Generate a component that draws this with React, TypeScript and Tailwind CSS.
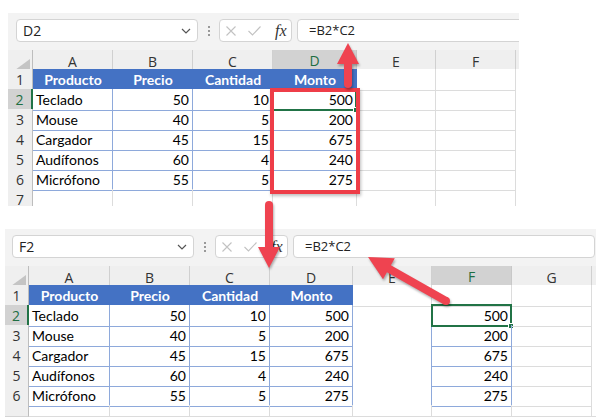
import React from 'react';

const data = [
  ['Teclado', '50', '10', '500'],
  ['Mouse', '40', '5', '200'],
  ['Cargador', '45', '15', '675'],
  ['Audífonos', '60', '4', '240'],
  ['Micrófono', '55', '5', '275'],
];
const heads = ['Producto', 'Precio', 'Cantidad', 'Monto'];

type SheetProps = {
  name: string;
  letters: string[];
  gridCls: string;
  selCol: number;
  showF?: boolean;
  sheetCls: string;
  toolbarCls: string;
  formulaCls: string;
  lastRowCls: string;
  hideLastNum?: boolean;
};

const uiFont = "font-['Open_Sans',sans-serif]";
const cellFont = "font-['Lato',sans-serif]";

function Toolbar({ name, toolbarCls, formulaCls }: { name: string; toolbarCls: string; formulaCls: string }) {
  return (
    <div className={`flex items-stretch pt-[6px] pb-[8px] ${toolbarCls}`}>
      <div className="flex w-[182px] items-center justify-between rounded-[4px] border border-[#d4d4d4] bg-white pl-[6px] pr-[6px]">
        <span className={`${uiFont} text-[14px] text-[#222]`}>{name}</span>
        <svg width="10" height="6" viewBox="0 0 10 6">
          <path d="M1 1 L5 5 L9 1" fill="none" stroke="#555" strokeWidth="1.2" />
        </svg>
      </div>
      <div className="flex w-[21px] flex-col items-center justify-center gap-[2px]">
        <span className="h-[2px] w-[2px] bg-[#999]" />
        <span className="h-[2px] w-[2px] bg-[#999]" />
        <span className="h-[2px] w-[2px] bg-[#999]" />
      </div>
      <div className="flex w-[73px] items-center rounded-[4px] border border-[#d4d4d4] bg-white pl-[6px]">
        <svg width="10" height="10" viewBox="0 0 10 10">
          <path d="M0.5 0.5 L9.5 9.5 M9.5 0.5 L0.5 9.5" stroke="#c2c2c2" strokeWidth="1.1" />
        </svg>
        <svg className="ml-[12px]" width="13" height="10" viewBox="0 0 13 10">
          <path d="M0.5 5 L4.5 9 L12.5 0.5" fill="none" stroke="#c2c2c2" strokeWidth="1.1" />
        </svg>
        <span className="ml-[14px] font-['Liberation_Serif',serif] text-[16px] italic leading-none text-[#333]">fx</span>
      </div>
      <div className={`ml-[5px] flex flex-1 items-center rounded-l-[4px] border border-[#d4d4d4] bg-white pl-[11px] ${formulaCls}`}>
        <span className={`${uiFont} text-[13px] text-[#222]`}>=B2*C2</span>
      </div>
    </div>
  );
}

function Sheet({ name, letters, gridCls, selCol, showF, sheetCls, toolbarCls, formulaCls, lastRowCls, hideLastNum }: SheetProps) {
  const rowNums = [1, 2, 3, 4, 5, 6, 7];
  return (
    <div className={`flex flex-col overflow-hidden bg-[#f3f3f3] ${sheetCls}`}>
      <Toolbar name={name} toolbarCls={toolbarCls} formulaCls={formulaCls} />

      {/* column headers */}
      <div className={`grid h-[19px] ${gridCls}`}>
        <div className="flex items-end justify-end border-b border-r border-[#bdbdbd] bg-[#efefef] pb-[2px] pr-[2px]">
          <svg width="15" height="11" viewBox="0 0 15 11">
            <polygon points="15,0 15,11 0,11" fill="#c4c4c4" />
          </svg>
        </div>
        {letters.map((l, i) =>
          i === selCol ? (
            <div
              key={l}
              className={`flex items-center justify-center border-b-2 border-r border-b-[#217346] border-r-[#c8c8c8] bg-[#d2d2d2] ${uiFont} text-[14px] text-[#1e6e42]`}
            >
              {l}
            </div>
          ) : (
            <div
              key={l}
              className={`flex items-center justify-center border-b border-r border-b-[#bdbdbd] border-r-[#d0d0d0] bg-[#efefef] ${uiFont} text-[14px] text-[#333]`}
            >
              {l}
            </div>
          )
        )}
        <div className="border-b border-[#bdbdbd] bg-[#efefef]" />
      </div>

      {/* rows */}
      {rowNums.map((r) => (
        <div key={r} className={`grid bg-white ${gridCls} ${r === 7 ? lastRowCls : 'h-[20px]'}`}>
          {r === 2 ? (
            <div className={`flex items-center justify-center border-b border-r-2 border-b-[#d4d4d4] border-r-[#217346] bg-[#d2d2d2] ${uiFont} text-[14px] text-[#1e6e42]`}>
              {r}
            </div>
          ) : (
            <div className={`flex items-center justify-center border-b border-r border-b-[#d4d4d4] border-r-[#bdbdbd] bg-[#efefef] ${uiFont} text-[14px] text-[#333]`}>
              {r === 7 && hideLastNum ? '' : r}
            </div>
          )}
          {letters.map((l, c) => {
            const selected = r === 2 && c === selCol;
            const overlay = selected ? (
              <div className="absolute -left-[1px] -top-[1px] bottom-[-1px] right-[-1px] border-2 border-[#217346]">
                <div className="absolute -bottom-[4px] -right-[4px] h-[6px] w-[6px] border border-white bg-[#217346]" />
              </div>
            ) : null;
            if (r === 1 && c < 4) {
              return (
                <div
                  key={l}
                  className={`flex items-center justify-center border-b border-[#8ea9db] bg-[#4472c4] ${cellFont} text-[14px] font-bold text-white`}
                >
                  {heads[c]}
                </div>
              );
            }
            if (r >= 2 && r <= 6 && c < 4) {
              return (
                <div
                  key={l}
                  className={`relative flex items-center border-b border-r border-[#8ea9db] px-[3px] ${cellFont} text-[14px] text-black ${c === 0 ? 'justify-start' : 'justify-end'}`}
                >
                  {data[r - 2][c]}
                  {overlay}
                </div>
              );
            }
            if (showF && r >= 2 && r <= 6 && c === 5) {
              return (
                <div
                  key={l}
                  className={`relative flex items-center justify-end border-b border-r border-[#8ea9db] px-[3px] ${cellFont} text-[14px] text-black`}
                >
                  {data[r - 2][3]}
                  {overlay}
                </div>
              );
            }
            if (showF && r >= 2 && r <= 6 && c === 4) {
              return <div key={l} className="border-b border-r border-b-[#dcdcdc] border-r-[#8ea9db]" />;
            }
            return (
              <div key={l} className="relative border-b border-r border-[#dcdcdc]">
                {overlay}
              </div>
            );
          })}
          <div className="border-b border-[#dcdcdc]" />
        </div>
      ))}
    </div>
  );
}

function Arrow({ x1, y1, x2, y2, w = 8, hl = 21, hw = 11 }: { x1: number; y1: number; x2: number; y2: number; w?: number; hl?: number; hw?: number }) {
  const dx = x2 - x1;
  const dy = y2 - y1;
  const len = Math.hypot(dx, dy);
  const ux = dx / len;
  const uy = dy / len;
  const px = -uy;
  const py = ux;
  const bx = x2 - ux * hl;
  const by = y2 - uy * hl;
  const pts = [
    [x1 + (px * w) / 2, y1 + (py * w) / 2],
    [bx + (px * w) / 2, by + (py * w) / 2],
    [bx + px * hw, by + py * hw],
    [x2, y2],
    [bx - px * hw, by - py * hw],
    [bx - (px * w) / 2, by - (py * w) / 2],
    [x1 - (px * w) / 2, y1 - (py * w) / 2],
  ]
    .map((p) => p.join(','))
    .join(' ');
  return (
    <g fill="#ef4350">
      <circle cx={x1} cy={y1} r={w / 2} />
      <polygon points={pts} />
    </g>
  );
}

export default function App() {
  return (
    <div className="relative flex h-[420px] w-[601px] flex-col overflow-hidden bg-white">
      <Sheet
        name="D2"
        letters={['A', 'B', 'C', 'D', 'E', 'F']}
        gridCls="grid-cols-[25px_80px_80px_80px_84px_79px_80px_1fr]"
        selCol={3}
        sheetCls="ml-[8px] mt-[13px] w-[511px] shrink-0"
        toolbarCls="pl-[8px]"
        formulaCls="-mr-[4px]"
        lastRowCls="h-[17px]"
      />
      <Sheet
        name="F2"
        letters={['A', 'B', 'C', 'D', 'E', 'F', 'G']}
        gridCls="grid-cols-[24px_81px_80px_80px_83px_79px_80px_80px_1fr]"
        selCol={5}
        showF
        sheetCls="ml-[5px] mt-[23px] w-[591px] shrink-0"
        toolbarCls="pl-[7px]"
        formulaCls="mr-[1px] rounded-r-[4px]"
        lastRowCls="h-[12px]"
        hideLastNum
      />

      {/* red highlight box over D2:D6 */}
      <div className="pointer-events-none absolute left-[270px] top-[88px] h-[106px] w-[90px] border-4 border-[#ee3d48] shadow-[1px_2px_3px_rgba(0,0,0,0.25)]" />

      <svg
        className="pointer-events-none absolute left-0 top-0 drop-shadow-[1px_2px_1px_rgba(0,0,0,0.3)]"
        width="601"
        height="420"
        viewBox="0 0 601 420"
      >
        <Arrow x1={348} y1={84} x2={348} y2={43} />
        <Arrow x1={269} y1={205} x2={269} y2={268} />
        <Arrow x1={446} y1={301} x2={368} y2={257} hl={24} hw={12} />
      </svg>
    </div>
  );
}
